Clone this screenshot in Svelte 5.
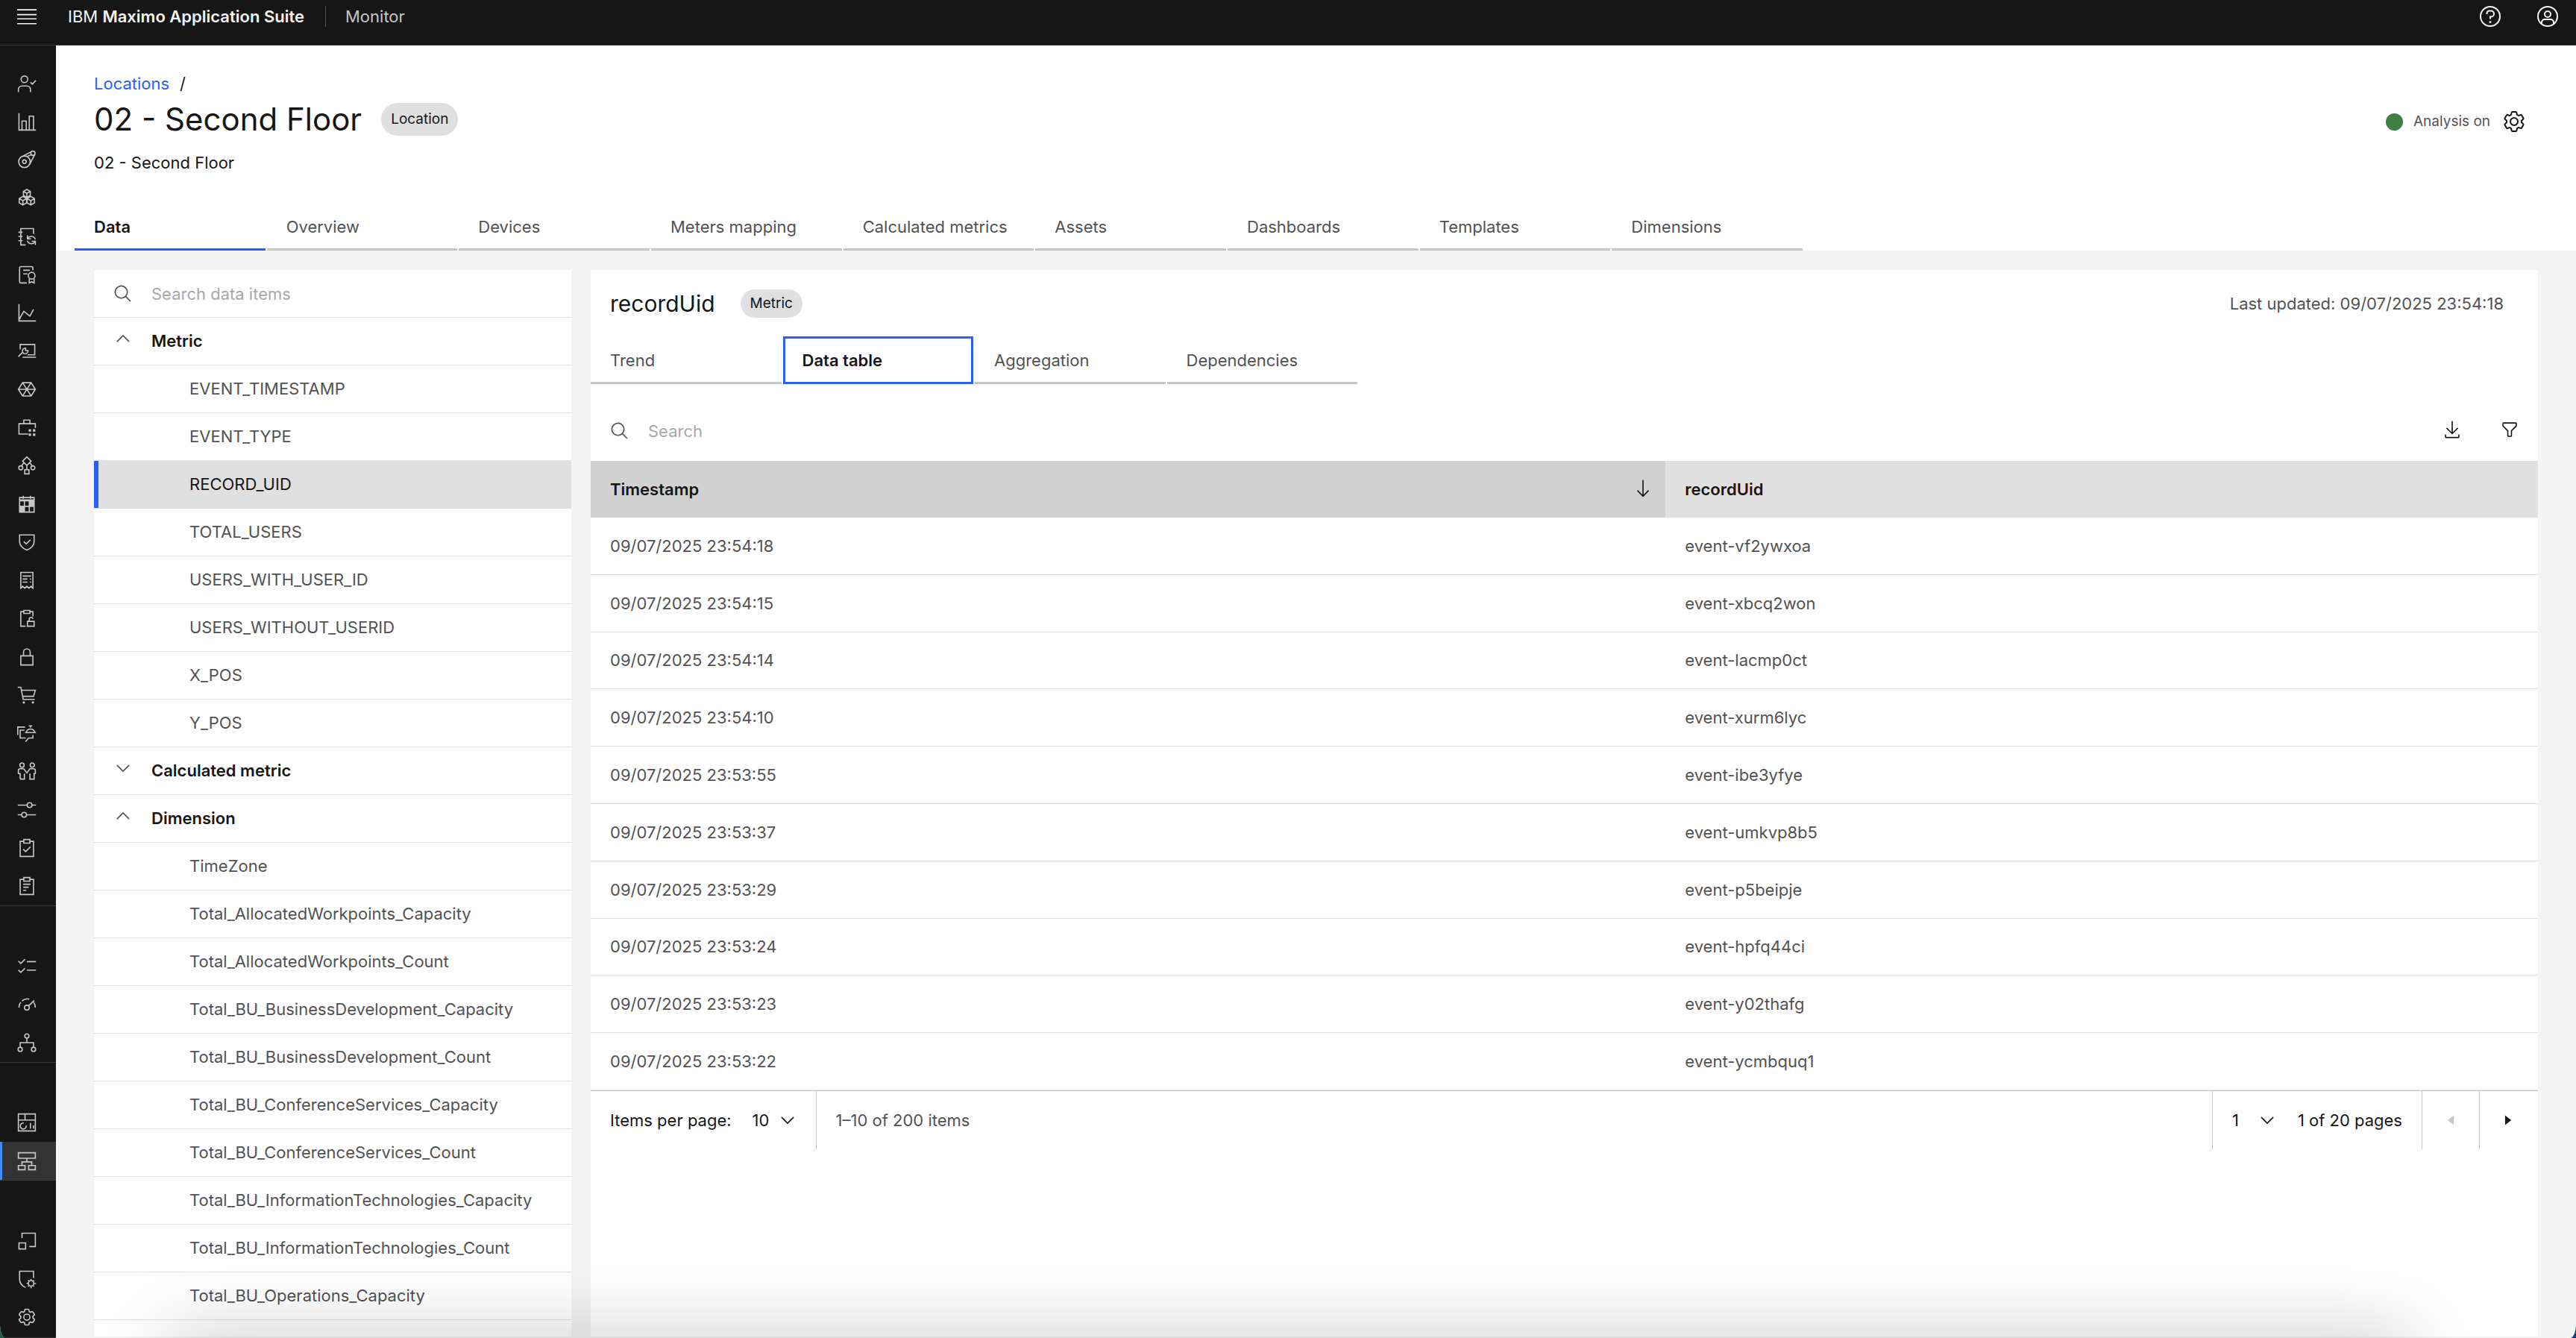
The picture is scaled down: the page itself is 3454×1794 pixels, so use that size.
<script>
	// path helpers for the 32x32 icon grid
	const c = (x, y, r) => `M${x - r} ${y}a${r} ${r} 0 1 0 ${2 * r} 0a${r} ${r} 0 1 0 ${-2 * r} 0`;
	const box = (x, y, w, h) => `M${x} ${y}h${w}v${h}h${-w}z`;
	const cube = (x, y, r) => {
		const w = r * 0.87;
		return `M${x} ${y - r}l${w} ${r / 2}v${r}l${-w} ${r / 2}l${-w} ${-r / 2}v${-r}zM${x} ${y}v${r}M${x} ${y}l${w} ${-r / 2}M${x} ${y}l${-w} ${-r / 2}`;
	};

	const gear = 'M27 16.76V15.23l1.92-1.68A2 2 0 0 0 29.3 11L26.94 7a2 2 0 0 0-1.73-1 2 2 0 0 0-.64.1l-2.43.82a11.35 11.35 0 0 0-1.31-.75l-.51-2.52a2 2 0 0 0-2-1.61H13.64a2 2 0 0 0-2 1.61l-.51 2.52a11.48 11.48 0 0 0-1.32.75L7.43 6.06A2 2 0 0 0 6.79 6 2 2 0 0 0 5.06 7L2.7 11a2 2 0 0 0 .41 2.51L5 15.24v1.53l-1.89 1.68A2 2 0 0 0 2.7 21l2.36 4a2 2 0 0 0 1.73 1 2 2 0 0 0 .64-.1l2.43-.82a11.35 11.35 0 0 0 1.31.75l.51 2.52a2 2 0 0 0 2 1.61h4.72a2 2 0 0 0 2-1.61l.51-2.52a11.48 11.48 0 0 0 1.32-.75l2.42.82a2 2 0 0 0 .64.1 2 2 0 0 0 1.73-1L29.3 21a2 2 0 0 0-.41-2.51zM25.21 24l-3.43-1.16a8.86 8.86 0 0 1-2.71 1.57L18.36 28h-4.72l-.71-3.55a9.36 9.36 0 0 1-2.7-1.57L6.79 24l-2.36-4 2.72-2.4a8.9 8.9 0 0 1 0-3.13L4.43 12l2.36-4 3.43 1.16a8.86 8.86 0 0 1 2.71-1.57L13.64 4h4.72l.71 3.55a9.36 9.36 0 0 1 2.7 1.57L25.21 8l2.36 4-2.72 2.4a8.9 8.9 0 0 1 0 3.13L27.57 20zM16 22a6 6 0 1 1 6-6 5.94 5.94 0 0 1-6 6zm0-10a3.91 3.91 0 0 0-4 4 3.91 3.91 0 0 0 4 4 3.91 3.91 0 0 0 4-4 3.91 3.91 0 0 0-4-4z';

	// s = stroked path, f = filled path
	const icons = {
		menu: { s: 'M0 5h32M0 13h32M0 20h32M0 28h32' },
		help: { s: c(16, 16, 13) + 'M11.5 13v-1a3.5 3.5 0 0 1 3.5-3.5h2a3.5 3.5 0 0 1 0 8h-1v3', f: c(16, 23.5, 1.5) },
		avatar: { s: c(16, 16, 13) + c(16, 13, 4) + 'M8 26v-2a4 4 0 0 1 4-4h8a4 4 0 0 1 4 4v2' },
		search: { f: 'M29 27.586l-7.552-7.552a11.018 11.018 0 1 0-1.414 1.414L27.586 29zM4 13a9 9 0 1 1 9 9 9.01 9.01 0 0 1-9-9z' },
		down: { s: 'M6 11l10 10 10-10' },
		up: { s: 'M6 21l10-10 10 10' },
		arrow: { f: 'M24.59 18.59L17 26.17V2h-2v24.17l-7.59-7.58L6 20l10 10 10-10z' },
		download: { f: 'M26 24v4H6v-4H4v4a2 2 0 0 0 2 2h20a2 2 0 0 0 2-2v-4zM26 14l-1.41-1.41L17 20.17V2h-2v18.17l-7.59-7.58L6 14l10 10z' },
		filter: { f: 'M18 28h-4a2 2 0 0 1-2-2v-7.59L4.59 11A2 2 0 0 1 4 9.59V6a2 2 0 0 1 2-2h20a2 2 0 0 1 2 2v3.59A2 2 0 0 1 27.41 11L20 18.41V26a2 2 0 0 1-2 2zM6 6v3.59l8 8V26h4v-8.41l8-8V6z' },
		caretLeft: { f: 'M21 8v16L11 16z' },
		caretRight: { f: 'M11 8v16l10-8z' },
		gear: { f: gear },
		user: { s: c(12, 9, 5.5) + 'M2 30v-4a6 6 0 0 1 6-6h8a6 6 0 0 1 6 6v4M22 14l3 3 6-6' },
		bars: { s: 'M3 2v28h28M8 30V15h7v15M20 30V7h7v23' },
		pulley: { s: c(12, 19.5, 9.5) + c(12, 19.5, 3) + c(26, 5.5, 3.5) + 'M8 11l17-9M20.5 24l9-17M16 11l7-3' },
		cubes: { s: cube(16, 9, 6.5) + cube(9.5, 21, 7) + cube(22.5, 21, 7) },
		sync: { s: 'M27 12V3H6v27h8M2 9h7M2 16h7M2 23h7M17 14v6h6M17 20a7 7 0 0 1 13 1M30 30v-6h-6M30 24a7 7 0 0 1-13-1' },
		certificate: { s: 'M26 9V5a2 2 0 0 0-2-2H6a2 2 0 0 0-2 2v23a2 2 0 0 0 2 2h10M10 9h11M10 15h7' + c(24, 18, 5.5) + 'M20 23v7l4-2 4 2v-7' },
		line: { s: 'M3 2v28h28M3 28l8-14 10 8 6-11' },
		laptop: { s: 'M5 14V6h24v17H17M9 27h22M2 26l7-7M9 19a5 5 0 0 1 5-7v4h4a5 5 0 0 1-7 5z' },
		wheel: { s: 'M9 5h14l7 11-7 11H9L2 16zM2 16h28M9 5l14 22M23 5L9 27' },
		toolkit: { s: 'M18 27H3V10h27v7M11 10V4h10v6', f: box(19, 19, 4, 4) + box(26, 19, 4, 4) + box(19, 26, 4, 4) + box(26, 26, 4, 4) },
		flow: { s: 'M16 2l7 7-7 7-7-7z' + c(6, 20, 3.3) + c(26, 20, 3.3) + box(12.5, 23, 7, 7) + 'M16 16v7M11 12l-4 5M21 12l4 5' },
		calendar: { s: box(4, 5, 24, 24) + 'M4 10.5h24M10 2v5M22 2v5M12 11v18M20 11v18M4 19.5h24', f: box(20, 11, 8, 8) + box(4, 20, 8, 9) + box(4, 8, 24, 3) },
		shield: { s: 'M4 4h24v11c0 7-5 11-12 14C9 26 4 22 4 15zM11 15l4 4 7-7' },
		receipt: { s: 'M6 3h20v26l-3-3-3.5 3-3.5-3-3.5 3L9 26l-3 3zM9 9h14M9 14h8M9 19h8M21 14h2M21 19h2' },
		unlock: { s: 'M11 5H6v24h8M21 5h5v8M11 3h10v5H11z' + box(17, 21, 11, 8) + 'M20 21v-3a3 3 0 0 1 6-1' },
		lock: { s: box(6, 14, 20, 15) + 'M10.5 14V8a5.5 5.5 0 0 1 11 0v6' },
		cart: { s: 'M1 3h5l4 20h19M7 8h23l-3 10H9', f: c(11, 28, 2) + c(26, 28, 2) },
		service: { s: 'M1 19V6h12M12 11H5v13h9M13 15h18M15 14a7.5 7.5 0 0 1 14 0M19 4h6M22 4v3M26 19v5h-7l-5 6' },
		people: { s: c(8, 6, 3.5) + c(25, 6, 3.5) + 'M5 29V20H2v-5a3 3 0 0 1 3-3h6l5 7 5-7h6a3 3 0 0 1 3 3v5h-2v9h-7v-9M5 29h7v-9' },
		sliders: { s: 'M1 8h15M25 8h6M1 24h6M16 24h15' + c(20.5, 8, 4) + c(11.5, 24, 4) },
		clipCheck: { s: 'M11 5H5v25h22V5h-6' + box(11, 2, 10, 6) + 'M10 18l4 4 8-8' },
		clipList: { s: 'M11 5H5v25h22V5h-6' + box(11, 2, 10, 6) + 'M10 13h12M10 18h9M10 23h5' },
		tasks: { s: 'M2 8l4 4 7-7M16 9h15M2 23l4 4 7-7M16 23h15' },
		gauge: { s: 'M3 21a13 13 0 0 1 3-9M8 10a13 13 0 0 1 12-3M27 12a13 13 0 0 1 3 9M19 18l9-9' + c(16, 21, 4) },
		tree: { s: c(16, 5, 3.5) + c(5, 27, 3.5) + c(27, 27, 3.5) + 'M16 9v7M5 23v-7h22v7' },
		dashboard: { s: box(2, 2, 28, 28) + 'M2 12h28M13 2v10M11 17a5 5 0 1 0 4 4M22 17v9M27 21v5' },
		hierarchy: { s: box(2, 2, 28, 9) + box(2, 23, 11, 7) + box(19, 23, 11, 7) + 'M16 11v6M8 23v-6h16v6' },
		resize: { s: 'M8 11V3h22v22H20' + box(3, 19, 11, 10) },
		shieldGear: { s: 'M27 14V3H4v13c0 7 3 11 10 14' + c(23, 23, 4.5) + 'M23 16v3M23 27v4M15.5 23h3M28 23h3M18 18l2 2M28 18l-2 2M18 28l2-2M28 28l-2-2' }
	};

	const rail = [
		['user', 'bars', 'pulley', 'cubes', 'sync', 'certificate', 'line', 'laptop', 'wheel', 'toolkit', 'flow', 'calendar', 'shield', 'receipt', 'unlock', 'lock', 'cart', 'service', 'people', 'sliders', 'clipCheck', 'clipList'],
		['tasks', 'gauge', 'tree'],
		['dashboard', 'hierarchy'],
		['resize', 'shieldGear', 'gear']
	];

	const tabs = ['Data', 'Overview', 'Devices', 'Meters mapping', 'Calculated metrics', 'Assets', 'Dashboards', 'Templates', 'Dimensions'];
	const views = ['Trend', 'Data table', 'Aggregation', 'Dependencies'];

	let groups = $state([
		{
			name: 'Metric',
			open: true,
			items: ['EVENT_TIMESTAMP', 'EVENT_TYPE', 'RECORD_UID', 'TOTAL_USERS', 'USERS_WITH_USER_ID', 'USERS_WITHOUT_USERID', 'X_POS', 'Y_POS']
		},
		{ name: 'Calculated metric', open: false, items: [] },
		{
			name: 'Dimension',
			open: true,
			items: [
				'TimeZone',
				'Total_AllocatedWorkpoints_Capacity',
				'Total_AllocatedWorkpoints_Count',
				'Total_BU_BusinessDevelopment_Capacity',
				'Total_BU_BusinessDevelopment_Count',
				'Total_BU_ConferenceServices_Capacity',
				'Total_BU_ConferenceServices_Count',
				'Total_BU_InformationTechnologies_Capacity',
				'Total_BU_InformationTechnologies_Count',
				'Total_BU_Operations_Capacity'
			]
		}
	]);

	const rows = [
		['09/07/2025 23:54:18', 'event-vf2ywxoa'],
		['09/07/2025 23:54:15', 'event-xbcq2won'],
		['09/07/2025 23:54:14', 'event-lacmp0ct'],
		['09/07/2025 23:54:10', 'event-xurm6lyc'],
		['09/07/2025 23:53:55', 'event-ibe3yfye'],
		['09/07/2025 23:53:37', 'event-umkvp8b5'],
		['09/07/2025 23:53:29', 'event-p5beipje'],
		['09/07/2025 23:53:24', 'event-hpfq44ci'],
		['09/07/2025 23:53:23', 'event-y02thafg'],
		['09/07/2025 23:53:22', 'event-ycmbquq1']
	];

	let tab = $state('Data');
	let view = $state('Data table');
	let selected = $state('RECORD_UID');
</script>

{#snippet icon(name, size = 26)}
	<svg class="icon" width={size} height={size} viewBox="0 0 32 32" aria-hidden="true">
		{#if icons[name].s}<path class="stroke" d={icons[name].s} />{/if}
		{#if icons[name].f}<path d={icons[name].f} />{/if}
	</svg>
{/snippet}

<div class="app">
	<header class="topbar">
		<button class="menu" aria-label="Menu">{@render icon('menu')}</button>
		<span class="brand">IBM <b>Maximo Application Suite</b></span>
		<span class="product">Monitor</span>
		<button class="tool" aria-label="Help">{@render icon('help', 32)}</button>
		<button class="tool" aria-label="Account">{@render icon('avatar', 32)}</button>
	</header>

	<div class="body">
		<nav class="rail">
			{#each rail as section}
				<div class="spacer"></div>
				{#each section as name}
					<button class:active={name === 'hierarchy'} aria-label={name}>{@render icon(name)}</button>
				{/each}
			{/each}
		</nav>

		<div class="page">
			<div class="head">
				<div class="crumbs"><a href="#locations">Locations</a><span>/</span></div>
				<div class="title">
					<h1>02 - Second Floor</h1>
					<span class="tag big">Location</span>
					<div class="analysis">
						<span class="dot"></span>
						<span>Analysis on</span>
						<button aria-label="Analysis settings">{@render icon('gear', 32)}</button>
					</div>
				</div>
				<p>02 - Second Floor</p>
				<div class="tabs" role="tablist">
					{#each tabs as name}
						<button role="tab" aria-selected={tab === name} class:on={tab === name} onclick={() => (tab = name)}>{name}</button>
					{/each}
				</div>
			</div>

			<main>
				<aside class="panel">
					<label class="search">
						{@render icon('search')}
						<input type="text" placeholder="Search data items" aria-label="Search data items" />
					</label>
					{#each groups as group}
						<button class="group" aria-expanded={group.open} onclick={() => (group.open = !group.open)}>
							{@render icon(group.open ? 'up' : 'down')}
							{group.name}
						</button>
						{#if group.open}
							{#each group.items as item}
								<button class="item" class:on={selected === item} onclick={() => (selected = item)}>{item}</button>
							{/each}
						{/if}
					{/each}
				</aside>

				<section class="panel">
					<div class="heading">
						<h2>recordUid</h2>
						<span class="tag">Metric</span>
						<span class="updated">Last updated: 09/07/2025 23:54:18</span>
					</div>

					<div class="views" role="tablist">
						{#each views as name}
							<button role="tab" aria-selected={view === name} class:on={view === name} onclick={() => (view = name)}>{name}</button>
						{/each}
					</div>

					<div class="toolbar">
						<label class="search">
							{@render icon('search')}
							<input type="text" placeholder="Search" aria-label="Search" />
						</label>
						<button aria-label="Download">{@render icon('download')}</button>
						<button aria-label="Filter">{@render icon('filter')}</button>
					</div>

					<table>
						<thead>
							<tr>
								<th class="sorted" aria-sort="descending"><div>Timestamp {@render icon('arrow')}</div></th>
								<th>recordUid</th>
							</tr>
						</thead>
						<tbody>
							{#each rows as [time, id]}
								<tr><td>{time}</td><td>{id}</td></tr>
							{/each}
						</tbody>
					</table>

					<div class="pager">
						<div class="cell size">
							<label for="size">Items per page:</label>
							<span class="select">
								<select id="size"><option>10</option><option>20</option><option>50</option></select>
								{@render icon('down')}
							</span>
						</div>
						<div class="cell range">1–10 of 200 items</div>
						<div class="cell current">
							<span class="select">
								<select id="page" aria-label="Page"><option>1</option><option>2</option><option>3</option></select>
								{@render icon('down')}
							</span>
							<label for="page">1 of 20 pages</label>
						</div>
						<button class="cell" disabled aria-label="Previous page">{@render icon('caretLeft')}</button>
						<button class="cell" aria-label="Next page">{@render icon('caretRight')}</button>
					</div>
				</section>
			</main>
		</div>
	</div>
	<div class="shade"></div>
</div>

<style>
	:global(body) {
		background: linear-gradient(to right, #1f5c4a 50%, #163a66 50%);
	}

	.app {
		display: flex;
		flex-direction: column;
		position: relative;
		height: 100vh;
		overflow: hidden;
		border-radius: 0 0 8px 8px / 0 0 18px 18px;
		background: #f4f4f4;
		color: #161616;
		font: 400 22px/28px Inter, "Liberation Sans", sans-serif;
	}

	.app *, .shade { box-sizing: border-box }

	button, input, select {
		border: none;
		border-radius: 0;
		background: none;
		padding: 0;
		margin: 0;
		font: inherit;
		color: inherit;
	}

	button { cursor: pointer }
	h1, h2, p { margin: 0; font-weight: 400 }

	.icon {
		display: block;
		flex: none;
		fill: currentColor;
	}

	.stroke {
		fill: none;
		stroke: currentColor;
		stroke-width: 2;
	}

	/* top bar */
	.topbar {
		display: flex;
		align-items: center;
		flex: none;
		height: 61px;
		padding-bottom: 16px;
		border-bottom: 1px solid #393939;
		background: #161616;
		color: #f4f4f4;
	}

	.menu {
		width: 75px;
		padding-left: 23px;
	}

	.brand {
		padding: 0 28px 0 16px;
		border-right: 1px solid #525252;
	}

	.brand b { font-weight: 600 }

	.product {
		flex: 1;
		padding-left: 26px;
		color: #c6c6c6;
	}

	.tool {
		display: grid;
		place-items: center;
		width: 77px;
	}

	/* left rail */
	.body {
		display: flex;
		flex: 1;
		min-height: 0;
	}

	.rail {
		display: flex;
		flex-direction: column;
		flex: none;
		width: 75px;
		padding-bottom: 1px;
		background: #161616;
		border-bottom: 1px solid #393939;
	}

	.rail button {
		display: flex;
		align-items: center;
		flex: 1;
		min-height: 0;
		padding-left: 23px;
		color: #c6c6c6;
	}

	.rail .active {
		background: #333;
		box-shadow: inset 3px 0 #4589ff;
	}

	.spacer {
		flex: none;
		height: 56px;
		border-top: 1px solid #393939;
	}

	.spacer:first-child {
		height: 25px;
		border: none;
	}

	/* page head */
	.page {
		display: flex;
		flex-direction: column;
		flex: 1;
		min-width: 0;
	}

	.head {
		flex: none;
		padding: 37px 67px 0 25px;
		background: #fff;
	}

	.crumbs, .title, .head p { padding-left: 26px }

	.crumbs {
		display: flex;
		gap: 14px;
	}

	.crumbs a {
		color: #2a60f6;
		text-decoration: none;
	}

	.title {
		display: flex;
		align-items: center;
		height: 68px;
		gap: 26px;
	}

	h1 {
		font-size: 42px;
		line-height: 58px;
	}

	.tag {
		padding: 5px 13px;
		border-radius: 22px;
		background: #e0e0e0;
		font-size: 19px;
	}

	.big { padding: 8px 13px }

	.analysis {
		display: flex;
		align-items: center;
		margin-left: auto;
		padding-top: 6px;
		color: #525252;
		font-size: 19px;
	}

	.analysis button {
		margin-left: 16px;
		color: #161616;
	}

	.dot {
		width: 23px;
		height: 23px;
		margin-right: 14px;
		border-radius: 50%;
		background: #3e8043;
	}

	.head p { padding-top: 10px }

	.tabs, .views {
		display: grid;
		gap: 2px;
	}

	.tabs {
		grid-template-columns: repeat(9, 1fr);
		max-width: 2317px;
		margin-top: 40px;
	}

	.tabs button, .views button {
		height: 64px;
		padding: 2px 0 0 26px;
		border-bottom: 3px solid #c6c6c6;
		text-align: left;
		white-space: nowrap;
		color: #525252;
	}

	.tabs .on, .views .on {
		color: #161616;
		font-weight: 600;
	}

	.tabs .on { border-bottom-color: #2a60f6 }

	/* panels */
	main {
		display: grid;
		grid-template-columns: 640px minmax(0, 1fr);
		gap: 26px;
		flex: 1;
		min-height: 0;
		padding: 26px 51px 2px;
	}

	.panel {
		min-height: 0;
		overflow: hidden;
		background: #fff;
	}

	.search {
		display: flex;
		align-items: center;
		gap: 25px;
		height: 64px;
		padding-left: 26px;
		color: #525252;
	}

	.search input {
		flex: 1;
		min-width: 0;
		outline: none;
	}

	.search input::placeholder {
		color: #a8a8a8;
		opacity: 1;
	}

	aside .search, .group, .item { border-bottom: 1px solid #e0e0e0 }

	.group, .item {
		display: flex;
		align-items: center;
		width: 100%;
		height: 64px;
		padding-bottom: 2px;
	}

	.group {
		gap: 25px;
		padding-left: 26px;
		font-weight: 600;
	}

	.group .icon {
		margin-bottom: 6px;
		color: #525252;
	}

	.item {
		padding-left: 128px;
		color: #525252;
	}

	.item.on {
		background: #e0e0e0;
		box-shadow: inset 6px 0 #2a60f6;
		color: #161616;
	}

	.heading {
		display: flex;
		align-items: center;
		height: 89px;
		padding: 0 46px 0 26px;
	}

	h2 {
		margin-right: 34px;
		font-size: 30px;
		line-height: 40px;
	}

	.updated {
		margin-left: auto;
		color: #525252;
	}

	.views {
		grid-template-columns: repeat(4, 1fr);
		max-width: 1028px;
	}

	.views .on {
		padding: 0 0 0 23px;
		border: 3px solid #2a60f6;
	}

	.toolbar {
		display: flex;
		align-items: center;
		height: 103px;
		padding-top: 22px;
	}

	.toolbar .search { flex: 1 }

	.toolbar button {
		display: grid;
		place-items: center;
		width: 77px;
		padding-bottom: 4px;
	}

	table {
		width: 100%;
		height: 844px;
		border-collapse: separate;
		border-spacing: 0;
		table-layout: fixed;
	}

	th, td {
		padding: 0 26px;
		text-align: left;
	}

	th {
		height: 76px;
		background: #e0e0e0;
		font-weight: 600;
	}

	.sorted {
		width: 55.2%;
		padding-right: 17px;
		background: #d1d1d1;
	}

	.sorted div {
		display: flex;
		justify-content: space-between;
	}

	td {
		border-bottom: 1px solid #e0e0e0;
		color: #525252;
	}

	/* pagination */
	.pager {
		display: flex;
		height: 79px;
		padding-right: 2px;
		border-top: 1px solid #c6c6c6;
	}

	.cell {
		display: flex;
		align-items: center;
		justify-content: center;
		min-width: 77px;
		border-left: 1px solid #c6c6c6;
	}

	.size {
		gap: 28px;
		padding: 0 25px 0 26px;
		border: none;
	}

	.range {
		flex: 1;
		justify-content: start;
		padding-left: 26px;
		color: #525252;
	}

	.current {
		gap: 28px;
		padding: 0 26px;
	}

	.cell:disabled { color: #c6c6c6 }

	.select {
		display: grid;
		align-items: center;
		justify-items: end;
	}

	.select select, .select .icon { grid-area: 1 / 1 }

	.select select {
		width: 60px;
		appearance: none;
	}

	.select .icon { pointer-events: none }

	/* soft shadow rising from the lower window edge */
	.shade {
		position: absolute;
		top: 100%;
		left: 220px;
		right: 220px;
		height: 60px;
		box-shadow: 0 0 100px rgba(0, 0, 0, 0.25);
		pointer-events: none;
	}
</style>
